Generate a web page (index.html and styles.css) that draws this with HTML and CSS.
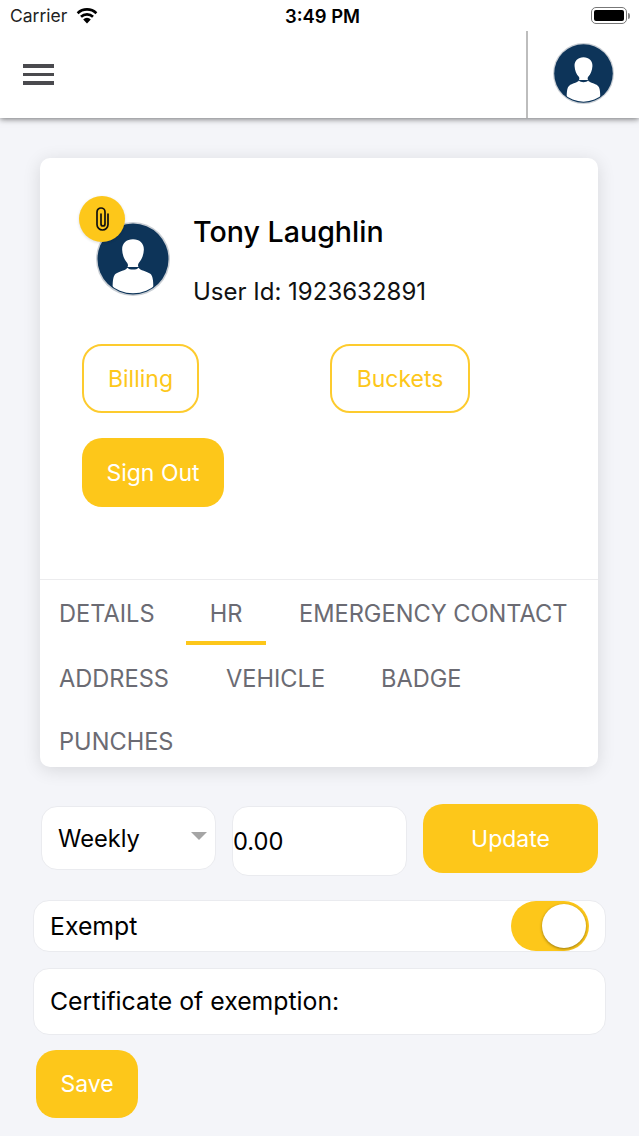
FILE: index.html
```html
<!DOCTYPE html>
<html lang="en">
<head>
    <meta charset="UTF-8">
    <meta name="viewport" content="width=device-width, initial-scale=1.0">
    <title>Profile</title>
    <link rel="stylesheet" href="styles.css">
</head>
<body>
    <div class="status-bar">
        <div class="status-left">
            <span>Carrier</span>
            <svg class="wifi" width="22" height="16" viewBox="0 0 22 16">
                <path d="M11 15.500 7.200 11.400a5.400 5.400 0 0 1 7.600 0Z" fill="#000"/>
                <path d="M5 8.800a8.600 8.600 0 0 1 12 0" fill="none" stroke="#000" stroke-width="2.600"/>
                <path d="M1.600 5.200a13.500 13.500 0 0 1 18.800 0" fill="none" stroke="#000" stroke-width="2.600"/>
            </svg>
        </div>
        <div class="status-time">3:49 PM</div>
        <div class="status-right">
            <div class="battery"><div class="battery-fill"></div></div>
            <div class="battery-cap"></div>
        </div>
    </div>

    <header class="nav">
        <div class="menu-icon"><span></span><span></span><span></span></div>
        <div class="nav-user">
            <svg class="avatar avatar-nav" viewBox="0 0 60 60">
                <use href="#avatar-art"/>
            </svg>
        </div>
    </header>

    <main class="content">
        <section class="card">
            <div class="profile">
                <div class="photo">
                    <svg class="avatar avatar-big" viewBox="0 0 60 60">
                        <defs>
                            <g id="avatar-art">
                                <circle cx="30" cy="30" r="30" fill="#c9ced4"/>
                                <circle cx="30" cy="30" r="28.800" fill="#0d3459"/>
                                <clipPath id="avatar-clip"><circle cx="30" cy="30" r="27.800"/></clipPath>
                                <g clip-path="url(#avatar-clip)" fill="#fff">
                                    <path d="M30 14c-5.500 0-9 3.500-8.800 8.500.2 4.500 2 8.500 4 10.500.8 1 1 2.500.3 3.500h9c-.7-1-.5-2.500.3-3.500 2-2 3.800-6 4-10.500.2-5-3.300-8.500-8.800-8.500Z"/>
                                    <path d="M25.500 37c-1 2-7 3-9.500 5-2 1.600-2.500 5-2.500 12v6h33v-6c0-7-.5-10.400-2.500-12-2.500-2-8.500-3-9.500-5-1.500 2-7.500 2-9 0Z"/>
                                </g>
                            </g>
                        </defs>
                        <use href="#avatar-art"/>
                    </svg>
                    <div class="clip-badge">
                        <svg width="15" height="27" viewBox="0 0 15 27">
                            <path d="M13 8v10.500a5.500 5.500 0 0 1-11 0V6a4 4 0 0 1 8 0v12a2 2 0 0 1-4 0V8" fill="none" stroke="#111" stroke-width="1.700" stroke-linecap="round"/>
                        </svg>
                    </div>
                </div>
                <div class="profile-text">
                    <h1>Tony Laughlin</h1>
                    <p>User Id: 1923632891</p>
                </div>
            </div>

            <div class="actions">
                <button class="btn btn-outline btn-billing">Billing</button>
                <button class="btn btn-outline btn-buckets">Buckets</button>
            </div>
            <button class="btn btn-solid btn-signout">Sign Out</button>

            <nav class="tabs">
                <div class="tab-row tab-row-first">
                    <a class="tab tab-details">DETAILS</a>
                    <a class="tab tab-hr active">HR</a>
                    <a class="tab tab-emergency">EMERGENCY CONTACT</a>
                </div>
                <div class="tab-row tab-row-second">
                    <a class="tab tab-address">ADDRESS</a>
                    <a class="tab tab-vehicle">VEHICLE</a>
                    <a class="tab">BADGE</a>
                </div>
                <div class="tab-row tab-row-third">
                    <a class="tab">PUNCHES</a>
                </div>
            </nav>
        </section>

        <div class="pay-row">
            <div class="field select-field">
                <span>Weekly</span>
                <div class="caret"></div>
            </div>
            <div class="field amount-field">0.00</div>
            <button class="btn btn-solid btn-update">Update</button>
        </div>

        <div class="field-row exempt-row">
            <span>Exempt</span>
            <div class="switch"><div class="knob"></div></div>
        </div>

        <div class="field-row cert-row">Certificate of exemption:</div>

        <button class="btn btn-solid btn-save">Save</button>
    </main>
</body>
</html>
```

FILE: styles.css
```css
* {
    box-sizing: border-box;
}
html, body {
    margin: 0;
    padding: 0;
}
body {
    width: 639px;
    height: 1136px;
    overflow: hidden;
    font-family: Inter, "Noto Sans", sans-serif;
    background-color: #f4f5f9;
    color: #000;
}

/* status bar */
.status-bar {
    height: 31px;
    background-color: #fff;
    display: flex;
    align-items: center;
    justify-content: space-between;
    padding: 0 9px 0 10px;
    position: relative;
    z-index: 1;
}
.status-left {
    display: flex;
    align-items: center;
    gap: 9px;
    font-size: 17.500px;
    color: #222;
}
.status-time {
    position: absolute;
    left: 0;
    right: 0;
    padding-left: 6px;
    text-align: center;
    font-size: 18.400px;
    font-weight: 600;
}
.status-right {
    display: flex;
    align-items: center;
    gap: 1px;
}
.battery {
    width: 36px;
    height: 17px;
    border: 1px solid #777;
    border-radius: 5px;
    padding: 2px;
}
.battery-fill {
    height: 100%;
    background-color: #000;
    border-radius: 2px;
}
.battery-cap {
    width: 2px;
    height: 6px;
    background-color: #888;
    border-radius: 0 2px 2px 0;
}

/* nav */
.nav {
    height: 87px;
    background-color: #fff;
    display: flex;
    justify-content: space-between;
    align-items: stretch;
    box-shadow: 0 1px 6px rgba(0,0,0,0.55);
    position: relative;
}
.menu-icon {
    width: 31px;
    margin: 33px 0 0 23px;
    display: flex;
    flex-direction: column;
    gap: 5px;
}
.menu-icon span {
    height: 3.500px;
    background-color: #4a4a4e;
}
.nav-user {
    width: 113px;
    border-left: 2px solid #bdbdbd;
    padding: 12px 0 0 25px;
}
.avatar {
    display: block;
}
.avatar-nav {
    width: 61px;
    height: 61px;
}
.avatar-big {
    width: 74px;
    height: 74px;
}

/* card */
.content {
    padding: 40px 33px 0;
}
.card {
    width: 558px;
    height: 609px;
    margin-left: 7px;
    background-color: #fff;
    border-radius: 10px;
    box-shadow: 0 3px 18px rgba(0,0,0,0.12);
    overflow: hidden;
}
.profile {
    display: flex;
    padding: 56px 0 0 56px;
}
.photo {
    position: relative;
    width: 74px;
    height: 74px;
    margin-top: 8px;
}
.clip-badge {
    position: absolute;
    left: -17px;
    top: -26px;
    width: 46px;
    height: 46px;
    border-radius: 50%;
    background-color: #fdc71a;
    display: flex;
    align-items: center;
    justify-content: center;
    box-shadow: 0 1px 3px rgba(0,0,0,0.15);
}
.profile-text {
    margin-left: 23px;
}
.profile-text h1 {
    margin: 0;
    font-size: 28.600px;
    line-height: 36px;
    font-weight: 500;
}
.profile-text p {
    margin: 27px 0 0;
    font-size: 24px;
    line-height: 30px;
    color: #111;
}
.btn {
    font-family: Inter, "Noto Sans", sans-serif;
    font-size: 23px;
    border-radius: 20px;
    cursor: pointer;
    display: block;
}
.btn-outline {
    background-color: #fff;
    border: 2px solid #fdcb2e;
    color: #fdc71a;
    height: 69px;
}
.btn-solid {
    background-color: #fdc71a;
    border: none;
    color: #fff;
}
.actions {
    display: flex;
    margin: 37px 0 0 42px;
}
.btn-billing {
    width: 117px;
}
.btn-buckets {
    width: 140px;
    margin-left: 131px;
}
.btn-signout {
    width: 142px;
    height: 69px;
    margin: 25px 0 0 42px;
}

/* tabs */
.tabs {
    margin-top: 72px;
    border-top: 1px solid #ececee;
}
.tab-row {
    display: flex;
}
.tab {
    font-size: 23.600px;
    color: #6b6b73;
    line-height: 30px;
    white-space: nowrap;
}
.tab-row-first {
    padding: 19px 0 0 19px;
}
.tab-details {
    width: 127px;
}
.tab-hr {
    width: 80px;
    margin-right: 33px;
    text-align: center;
    padding-bottom: 12px;
    border-bottom: 4px solid #fdc71a;
}
.tab-row-second {
    padding: 19px 0 0 19px;
}
.tab-address {
    width: 167px;
}
.tab-vehicle {
    width: 155px;
}
.tab-row-third {
    padding: 33px 0 0 19px;
}

/* form */
.pay-row {
    display: flex;
    align-items: flex-start;
    margin: 37px 0 0 8px;
}
.field {
    background-color: #fff;
    border: 1px solid #eaebef;
    border-radius: 16px;
    font-size: 23.700px;
}
.select-field {
    width: 175px;
    height: 64px;
    margin-top: 2px;
    padding: 0 16px;
    display: flex;
    align-items: center;
    justify-content: space-between;
    position: relative;
}
.caret {
    width: 0;
    height: 0;
    border-left: 8px solid transparent;
    border-right: 8px solid transparent;
    border-top: 8px solid #a5a5a5;
    position: absolute;
    right: 8px;
    top: 25px;
}
.amount-field {
    width: 175px;
    height: 70px;
    margin: 2px 0 0 16px;
    padding-left: 0;
    line-height: 70px;
}
.btn-update {
    width: 175px;
    height: 69px;
    margin-left: 16px;
}
.field-row {
    width: 573px;
    background-color: #fff;
    border: 1px solid #eaebef;
    border-radius: 16px;
    font-size: 24.800px;
    padding-left: 16px;
}
.exempt-row {
    height: 52px;
    margin-top: 24px;
    display: flex;
    align-items: center;
    justify-content: space-between;
    padding-right: 16px;
}
.switch {
    width: 78px;
    height: 50px;
    border-radius: 25px;
    background-color: #fdc71a;
    position: relative;
}
.knob {
    position: absolute;
    right: 3px;
    top: 3px;
    width: 44px;
    height: 44px;
    border-radius: 50%;
    background-color: #fff;
    box-shadow: 0 1px 3px rgba(0,0,0,0.4);
}
.cert-row {
    height: 67px;
    line-height: 65px;
    margin-top: 16px;
}
.btn-save {
    width: 102px;
    height: 68px;
    margin: 15px 0 0 3px;
}
```
